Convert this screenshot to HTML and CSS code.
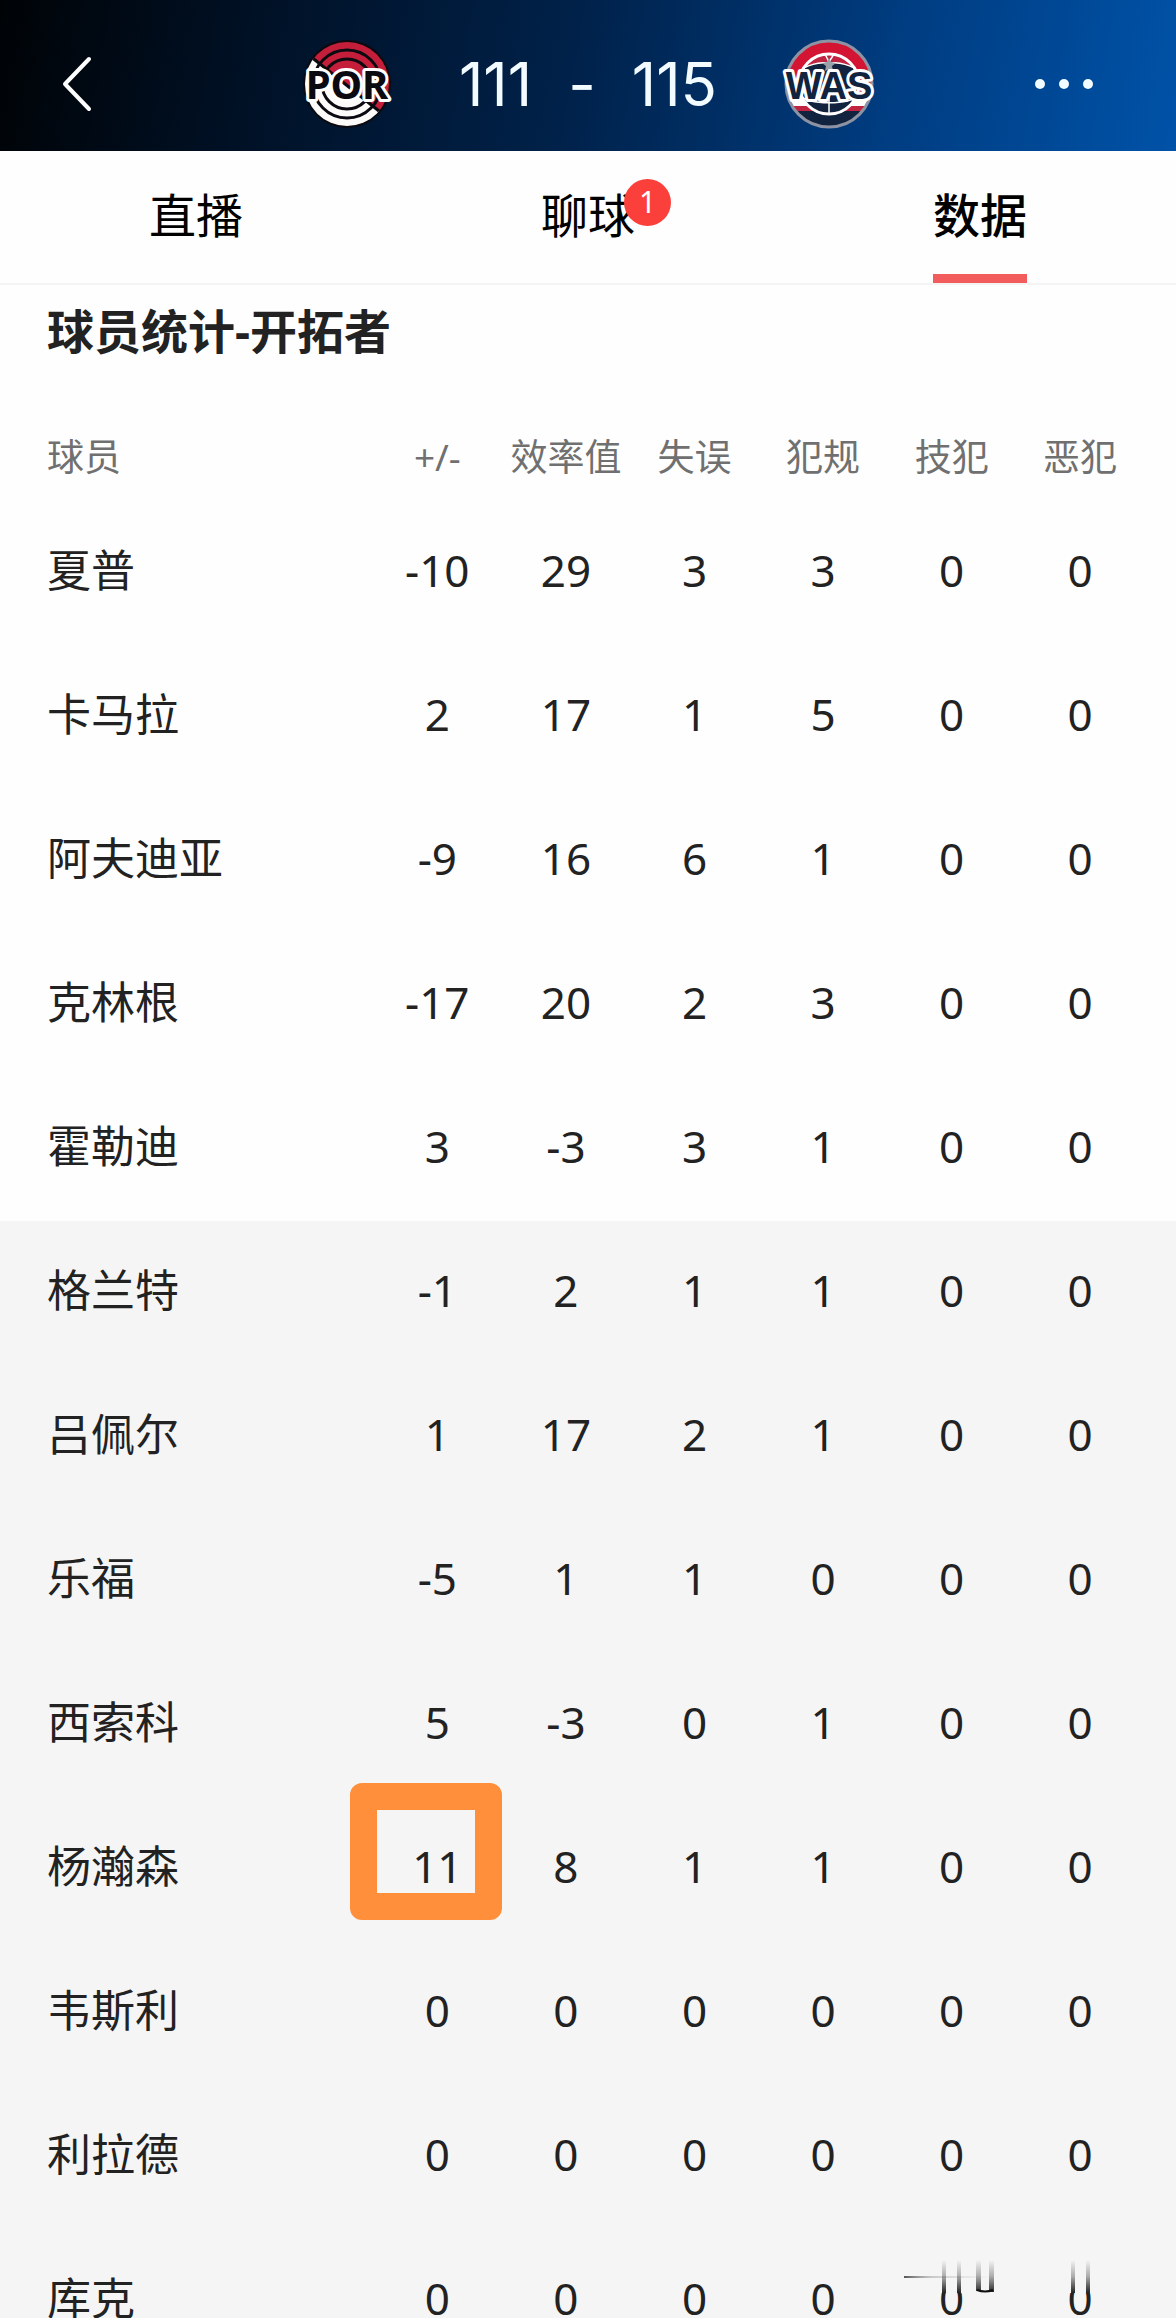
FILE: index.html
```html
<!DOCTYPE html>
<html lang="zh-CN">
<head>
<meta charset="utf-8">
<meta name="viewport" content="width=device-width, initial-scale=1">
<title>球员统计-开拓者</title>
<link rel="stylesheet" href="styles.css">
</head>
<body>
<div class="app">
  <header class="topbar">
    <button class="icon-button back" type="button" aria-label="返回">
      <svg width="32" height="56" viewBox="0 0 32 56" fill="none" stroke="#fff" stroke-width="4" stroke-linecap="round" stroke-linejoin="round"><path d="M29 3 5 28l24 25"/></svg>
    </button>
    <div class="match">
      <svg class="logo" width="96" height="96" viewBox="0 0 96 96" role="img" aria-label="POR">
        <defs>
          <clipPath id="por-disc"><circle cx="48" cy="48" r="42"/></clipPath>
        </defs>
        <circle cx="48" cy="48" r="44" fill="#0b0a10"/>
        <g clip-path="url(#por-disc)">
          <path d="M-4 8 L100 91 V-4 H-4Z" fill="#c41e3a"/>
          <path d="M-4 8 L100 91 V100 H-4Z" fill="#fdfafa"/>
          <path d="M-4 8 L100 91" stroke="#0b0a10" stroke-width="3"/>
        </g>
        <g fill="none" stroke="#0b0a10" stroke-width="3">
          <circle cx="48" cy="48" r="34"/>
          <circle cx="48" cy="48" r="25"/>
        </g>
        <text class="logo-text por" x="48" y="63">POR</text>
      </svg>
      <div class="score"><span>111</span><span class="dash">-</span><span>115</span></div>
      <svg class="logo" width="96" height="96" viewBox="0 0 96 96" role="img" aria-label="WAS">
        <defs>
          <clipPath id="was-disc"><circle cx="48" cy="48" r="43"/></clipPath>
          <clipPath id="was-ball"><circle cx="48" cy="48" r="30"/></clipPath>
        </defs>
        <g clip-path="url(#was-disc)">
          <path d="M0 0H96V64H0Z" fill="#d31432"/>
          <path d="M0 64H96V70H0Z" fill="#fff"/>
          <path d="M0 70H96V75H0Z" fill="#c02440"/>
          <path d="M0 75H96V96H0Z" fill="#12233f"/>
        </g>
        <circle cx="48" cy="48" r="43" fill="none" stroke="#8d93a3" stroke-width="3"/>
        <circle cx="48" cy="48" r="30" fill="#12233f"/>
        <g clip-path="url(#was-ball)">
          <path d="M16 40C24 22 72 22 80 40V10H16Z" fill="#c02440"/>
          <path d="M14 40C24 22 72 22 82 40M48 28V80M44 18l4 8 5-8M20 60c8 9 48 9 56 0" fill="none" stroke="#fff" stroke-width="1.5"/>
        </g>
        <circle cx="48" cy="48" r="30" fill="none" stroke="#fff" stroke-width="3"/>
        <path d="M48 22l2 4 5 1-4 3 1 5-4-2-4 2 1-5-4-3 5-1Z" fill="#9aa0a8"/>
        <text class="logo-text was" x="48" y="63">WAS</text>
      </svg>
    </div>
    <button class="icon-button more" type="button" aria-label="更多">
      <svg width="64" height="16" viewBox="0 0 64 16" fill="#f2fbff"><circle cx="8" cy="8" r="5"/><circle cx="32" cy="8" r="5"/><circle cx="56" cy="8" r="5"/></svg>
    </button>
  </header>

  <nav class="tabs">
    <a class="tab" href="#live"><span class="tab-label">直播</span></a>
    <a class="tab" href="#chat"><span class="tab-label">聊球<span class="badge">1</span></span></a>
    <a class="tab active" href="#stats" aria-current="page"><span class="tab-label">数据</span></a>
  </nav>

  <main class="content" id="stats">
    <h1 class="title">球员统计-开拓者</h1>
    <table class="stats">
      <colgroup><col class="col-name"><col><col><col><col><col><col class="col-last"></colgroup>
      <thead>
        <tr><th scope="col">球员</th><th scope="col">+/-</th><th scope="col">效率值</th><th scope="col">失误</th><th scope="col">犯规</th><th scope="col">技犯</th><th scope="col">恶犯</th></tr>
      </thead>
      <tbody>
        <tr><th scope="row">夏普</th><td>-10</td><td>29</td><td>3</td><td>3</td><td>0</td><td>0</td></tr>
        <tr><th scope="row">卡马拉</th><td>2</td><td>17</td><td>1</td><td>5</td><td>0</td><td>0</td></tr>
        <tr><th scope="row">阿夫迪亚</th><td>-9</td><td>16</td><td>6</td><td>1</td><td>0</td><td>0</td></tr>
        <tr><th scope="row">克林根</th><td>-17</td><td>20</td><td>2</td><td>3</td><td>0</td><td>0</td></tr>
        <tr><th scope="row">霍勒迪</th><td>3</td><td>-3</td><td>3</td><td>1</td><td>0</td><td>0</td></tr>
      </tbody>
      <tbody class="bench">
        <tr><th scope="row">格兰特</th><td>-1</td><td>2</td><td>1</td><td>1</td><td>0</td><td>0</td></tr>
        <tr><th scope="row">吕佩尔</th><td>1</td><td>17</td><td>2</td><td>1</td><td>0</td><td>0</td></tr>
        <tr><th scope="row">乐福</th><td>-5</td><td>1</td><td>1</td><td>0</td><td>0</td><td>0</td></tr>
        <tr><th scope="row">西索科</th><td>5</td><td>-3</td><td>0</td><td>1</td><td>0</td><td>0</td></tr>
        <tr><th scope="row">杨瀚森</th><td class="marked">11</td><td>8</td><td>1</td><td>1</td><td>0</td><td>0</td></tr>
        <tr><th scope="row">韦斯利</th><td>0</td><td>0</td><td>0</td><td>0</td><td>0</td><td>0</td></tr>
        <tr><th scope="row">利拉德</th><td>0</td><td>0</td><td>0</td><td>0</td><td>0</td><td>0</td></tr>
        <tr><th scope="row">库克</th><td>0</td><td>0</td><td>0</td><td>0</td><td>0</td><td>0</td></tr>
      </tbody>
    </table>
  </main>

  <svg class="smudge" width="252" height="40" viewBox="0 0 252 40" aria-hidden="true">
    <defs>
      <linearGradient id="streak" x1="0" y1="0" x2="0" y2="1"><stop offset="0" stop-color="#222" stop-opacity="0"/><stop offset=".5" stop-color="#222" stop-opacity=".35"/><stop offset="1" stop-color="#222"/></linearGradient>
      <linearGradient id="trail" x1="0" y1="0" x2="1" y2="0"><stop offset="0" stop-color="#555"/><stop offset=".3" stop-color="#aaa" stop-opacity=".6"/><stop offset="1" stop-color="#ccc" stop-opacity="0"/></linearGradient>
    </defs>
    <rect width="252" height="38" fill="#f5f5f5"/>
    <path d="M0 21h90v2H0z" fill="url(#trail)"/>
    <g fill="url(#streak)">
      <path d="M38 5h4v33h-4zM53 5h4v33h-4zM72 5h5v31h-5zM85 5h5v32h-5zM167 5h4v33h-4zM182 5h4v33h-4z"/>
    </g>
    <path d="M73 35q8 3 16 0" fill="none" stroke="#111" stroke-width="2"/>
  </svg>
</div>
</body>
</html>
```
FILE: styles.css
```css
*,
*::after { box-sizing: border-box; }

body {
  margin: 0;
  background: #fefefe;
  color: #222;
  font-family: "Noto Sans", "Noto Sans CJK SC", sans-serif;
}

.app {
  position: relative;
  display: flex;
  flex-direction: column;
  height: 100vh;
  overflow: hidden;
  border-bottom: 2px solid #fefefe;
}

/* Score bar */
.topbar {
  flex: none;
  display: grid;
  grid-template-columns: 1fr auto 1fr;
  align-items: center;
  height: 151px;
  padding: 16px 40px 0;
  background: linear-gradient(100deg, #000306 0%, #001126 22%, #002149 48%, #003c80 75%, #0052a8 100%);
}

.icon-button {
  display: flex;
  border: 0;
  background: none;
}

.back { padding: 0 20px; }

.more {
  justify-self: end;
  padding: 0 40px;
}

.match {
  display: flex;
  align-items: center;
  gap: 64px;
}

.logo { display: block; }

.logo-text {
  font-weight: 700;
  text-anchor: middle;
  stroke: #fff;
  stroke-width: 6px;
  stroke-linejoin: round;
  paint-order: stroke;
}

.por { font-family: "Noto Sans", sans-serif; font-size: 40px; fill: #0b0a10; }
.was { font-family: "Liberation Sans", sans-serif; font-size: 38px; fill: #12233f; }

.score {
  display: flex;
  align-items: center;
  gap: 36px;
  color: #f2fbff;
  font-family: Inter, sans-serif;
  font-size: 60px;
  line-height: 72px;
}

/* Tabs */
.tabs {
  flex: none;
  display: grid;
  grid-template-columns: repeat(3, 1fr);
  height: 134px;
  border-bottom: 2px solid #f4f4f4;
}

.tab {
  display: flex;
  justify-content: center;
  color: #000;
  font-size: 47px;
  line-height: 128px;
  text-decoration: none;
}

.tab-label {
  position: relative;
  height: 132px;
}

.active { font-weight: 500; }
.active .tab-label { border-bottom: 9px solid #f25c5c; }

.badge {
  position: absolute;
  top: 28px;
  left: 83px;
  width: 47px;
  height: 47px;
  border-radius: 50%;
  background: #fb403b;
  color: #fff;
  font-size: 30px;
  line-height: 46px;
  text-align: center;
}

/* Player statistics */
.content {
  flex: 1;
  min-height: 0;
  overflow-y: auto;
  scrollbar-width: none;
}

.title {
  margin: 0;
  padding: 10px 47px 0;
  font-size: 47px;
  font-weight: 700;
  line-height: 72px;
}

.stats {
  width: 100%;
  table-layout: fixed;
  border-collapse: collapse;
  font-size: 44px;
  line-height: 64px;
}

.col-name { width: 373px; }
.col-last { width: 160px; }

.stats th,
.stats td {
  height: 144px;
  padding: 0 0 6px;
  font-weight: 400;
  text-align: center;
  white-space: nowrap;
}

.stats th:first-child {
  padding-left: 47px;
  text-align: left;
}

.stats th:last-child,
.stats td:last-child { padding-right: 32px; }

.stats thead th {
  height: 134px;
  padding-top: 46px;
  padding-bottom: 0;
  color: #707070;
  font-size: 37px;
}

.bench { background: #f5f5f5; }

.stats .marked { position: relative; }

.marked::after {
  content: "";
  position: absolute;
  top: -14px;
  right: 0;
  width: 152px;
  height: 137px;
  border: 27px solid #ff8f3b;
  border-radius: 12px;
}

.smudge {
  position: absolute;
  right: 20px;
  bottom: 23px;
}
```
